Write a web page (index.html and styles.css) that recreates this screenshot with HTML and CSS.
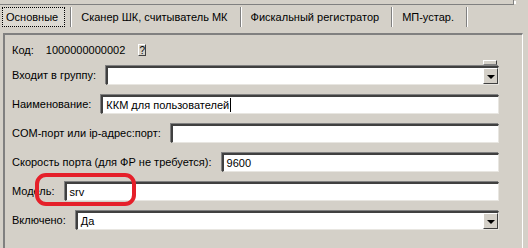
FILE: index.html
```html
<!DOCTYPE html>
<html lang="ru">
<head>
  <meta charset="UTF-8" />
  <title>ККМ для пользователей</title>
  <link rel="stylesheet" href="styles.css">
</head>
<body>

<div class="frame-edge"></div>

<div class="tabs">
  <div class="tab active"><span class="focus">Основные</span></div>
  <div class="tab">Сканер ШК, считыватель МК</div>
  <div class="tab">Фискальный регистратор</div>
  <div class="tab">МП-устар.</div>
</div>

<div class="panel">
  <div class="row row-code">
    <span class="label">Код:</span>
    <span class="code">1000000000002</span>
    <span class="btn-q">?</span>
  </div>
  <div class="row">
    <span class="label">Входит в группу:</span>
    <div class="field combo"><span class="stub"></span><span class="drop"></span></div>
  </div>
  <div class="row">
    <span class="label">Наименование:</span>
    <div class="field">ККМ для пользователей<span class="caret"></span></div>
  </div>
  <div class="row">
    <span class="label">COM-порт или ip-адрес:порт:</span>
    <div class="field"></div>
  </div>
  <div class="row">
    <span class="label">Скорость порта (для ФР не требуется):</span>
    <div class="field">9600</div>
  </div>
  <div class="row">
    <span class="label">Модель:</span>
    <div class="field">srv</div>
  </div>
  <div class="row">
    <span class="label">Включено:</span>
    <div class="field combo">Да<span class="drop"></span></div>
  </div>

  <div class="mark"></div>
</div>

</body>
</html>
```

FILE: styles.css
```css
body { margin: 0; background: #d4d0c8; font-family: "Liberation Sans", Arial, sans-serif; font-size: 11px; color: #000; overflow: hidden; }

.frame-edge { width: 513px; height: 4px; border-bottom: 1px solid #808080; border-right: 1px solid #808080; box-shadow: 3px 0 0 -1px #fff; }

.tabs { display: flex; height: 24px; margin-top: 1px; padding-left: 2px; }
.tab { display: flex; align-items: center; padding: 0 12px 0 10px; margin: 1px 0 3px; border-right: 1px solid #808080; box-shadow: 1px 0 0 #fff; }
.tab.active { padding: 0 5px 0 0; }
.tab .focus { display: flex; align-items: center; height: 18px; padding: 0 6px 0 3px; border: 1px dotted #000; background: #dcd9d2; }

.panel { position: relative; margin: 3px 0 0 3px; width: 520px; height: 215px; border-top: 2px solid #808080; border-left: 2px solid #808080; border-right: 1px solid #fff; padding: 9px 23px 0 7px; box-sizing: border-box; }

.row { display: flex; align-items: center; height: 20px; margin-bottom: 9px; }
.row:last-of-type { margin-bottom: 0; }
.row-code { height: 12px; }
.label { white-space: nowrap; margin-right: 10px; }
.code { margin-left: 2px; margin-right: 13px; }

.btn-q { display: flex; align-items: center; justify-content: center; width: 6px; height: 10px; font-size: 10px; border: 1px solid; border-color: #fff #404040 #404040 #fff; background: #d4d0c8; }

.field { position: relative; flex: 1; height: 16px; display: flex; align-items: center; padding-left: 3px; background: #fff; border-top: 2px solid #404040; border-left: 2px solid #404040; border-right: 1px solid #e8e6e1; border-bottom: 1px solid #e8e6e1; box-shadow: -1px -1px 0 #808080; }
.caret { display: inline-block; width: 1px; height: 14px; background: #000; margin-left: 1px; }

.combo .drop { position: absolute; right: 0; top: 0; width: 13px; height: 14px; background: #d4d0c8; border: 1px solid; border-color: #fff #404040 #404040 #fff; }
.combo .drop::after { content: ""; position: absolute; left: 3px; top: 6px; border-left: 4px solid transparent; border-right: 4px solid transparent; border-top: 4px solid #000; }
.combo .stub { position: absolute; right: 1px; top: -8px; width: 12px; height: 3px; background: #d4d0c8; border: 1px solid; border-color: #fff #404040 #808080 #fff; }

.mark { position: absolute; left: 30px; top: 138px; width: 93px; height: 25px; border: 4px solid #e5202a; border-radius: 11px; }
```
